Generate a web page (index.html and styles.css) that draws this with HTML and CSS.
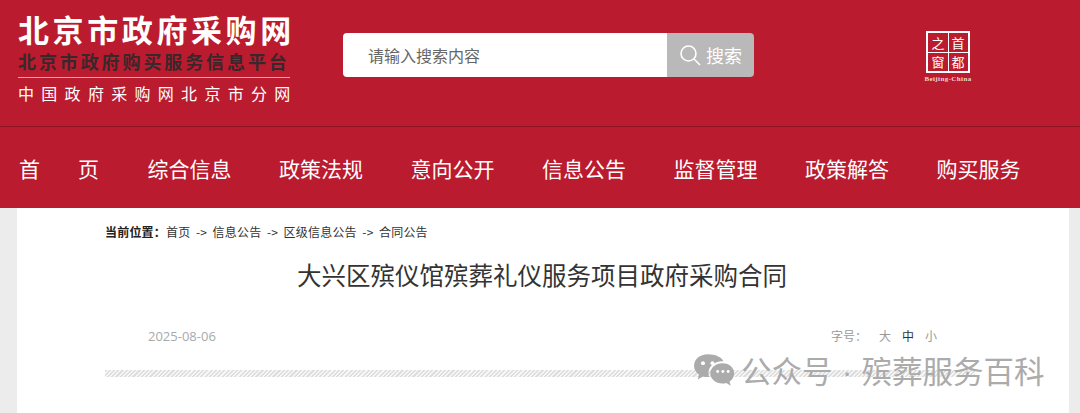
FILE: index.html
```html
<!DOCTYPE html>
<html lang="zh-CN">
<head>
    <meta charset="UTF-8">
    <title>大兴区殡仪馆殡葬礼仪服务项目政府采购合同</title>
    <link rel="stylesheet" href="styles.css">
</head>
<body>
    <header class="top">
        <div class="brand">
            <div class="brand-name">北京市政府采购网</div>
            <div class="brand-sub">北京市政府购买服务信息平台</div>
            <div class="brand-site">中国政府采购网北京市分网</div>
        </div>
        <div class="search">
            <div class="search-input">请输入搜索内容</div>
            <div class="search-btn">
                <svg class="search-icon" width="22" height="22" viewBox="0 0 22 22" fill="none" stroke="#fff" stroke-width="1.6">
                    <circle cx="9.500" cy="9.500" r="7.500"/>
                    <path d="M15 15l6 6"/>
                </svg>
                <span>搜索</span>
            </div>
        </div>
        <div class="seal">
            <div class="seal-box">
                <span>之</span><span>首</span><span>窗</span><span>都</span>
            </div>
            <div class="seal-text">Beijing-China</div>
        </div>
    </header>

    <nav class="nav">
        <a href="#" class="nav-home">首<i></i>页</a>
        <a href="#">综合信息</a>
        <a href="#">政策法规</a>
        <a href="#">意向公开</a>
        <a href="#">信息公告</a>
        <a href="#">监督管理</a>
        <a href="#">政策解答</a>
        <a href="#">购买服务</a>
    </nav>

    <main class="page">
        <div class="crumb"><b>当前位置：</b>首页 -&gt; 信息公告 -&gt; 区级信息公告 -&gt; 合同公告</div>
        <h1>大兴区殡仪馆殡葬礼仪服务项目政府采购合同</h1>
        <div class="meta">
            <span class="date">2025-08-06</span>
            <span class="size">字号：<em>大</em><em class="on">中</em><em>小</em></span>
        </div>
        <div class="stripe"></div>
    </main>

    <div class="mark">
        <svg width="42" height="36" viewBox="0 0 40 34">
            <path fill="#ababab" d="M14 1C6.500 1 1 5.800 1 12c0 3.500 1.800 6.400 4.800 8.500L4.500 25l5-2.800c1.400.4 2.800.6 4.300.6.600 0 1 0 1.500-.1-.4-1.200-.6-2.400-.6-3.700 0-6.400 5.800-11.400 13-11.400h1.300C27.200 3.700 21.200 1 14 1z"/>
            <path fill="#ababab" d="M28 9.500c-6.500 0-11.500 4.300-11.500 9.700s5 9.800 11.500 9.800c1.300 0 2.500-.2 3.700-.5l4.200 2.500-1.100-3.900c2.800-1.800 4.400-4.600 4.400-7.900 0-5.400-4.600-9.700-10.800-9.700z"/>
            <g fill="#fff">
                <circle cx="9.500" cy="9.500" r="1.900"/>
                <circle cx="18.500" cy="9.500" r="1.900"/>
                <circle cx="23.500" cy="17.500" r="1.400"/>
                <circle cx="28.500" cy="17.500" r="1.400"/>
                <circle cx="33.500" cy="17.500" r="1.400"/>
            </g>
        </svg>
        <span>公众号<span class="mark-dot"> · </span>殡葬服务百科</span>
    </div>
</body>
</html>
```

FILE: styles.css
```css
* {
    margin: 0;
    padding: 0;
    box-sizing: border-box;
}

html, body {
    height: 413px;
    overflow: hidden;
}

body {
    position: relative;
    background: #ececec;
    font-family: "Noto Sans CJK SC", "Liberation Sans", sans-serif;
    color: #333333;
}

.top {
    height: 127px;
    background: #bb1b2e;
    border-bottom: 1px solid #8f1423;
    display: flex;
    align-items: flex-start;
    padding-left: 18px;
}

.brand {
    width: 272px;
    padding-top: 10px;
}

.brand-name {
    font-size: 31px;
    line-height: 38px;
    font-weight: 700;
    color: #ffffff;
    letter-spacing: 3.6px;
    white-space: nowrap;
}

.brand-sub {
    margin-top: 2px;
    font-size: 18px;
    line-height: 23px;
    font-weight: 700;
    color: #38282b;
    letter-spacing: 2.9px;
    white-space: nowrap;
    padding-bottom: 4px;
    border-bottom: 1px solid #e6a5ad;
}

.brand-site {
    margin-top: 3px;
    font-size: 16px;
    line-height: 24px;
    color: #ffffff;
    letter-spacing: 7.3px;
    white-space: nowrap;
}

.search {
    display: flex;
    width: 411px;
    height: 44px;
    margin: 33px 0 0 53px;
    border-radius: 4px;
    overflow: hidden;
}

.search-input {
    width: 324px;
    background: #ffffff;
    padding-left: 25px;
    font-size: 16px;
    line-height: 44px;
    color: #666666;
}

.search-btn {
    flex: 1;
    background: #b9b9b9;
    display: flex;
    align-items: center;
    padding-left: 12px;
    gap: 5px;
    font-size: 18px;
    color: #ffffff;
}

.seal {
    margin: 31px 0 0 170px;
    width: 48px;
    display: flex;
    flex-direction: column;
    align-items: center;
}

.seal-box {
    width: 44px;
    height: 42px;
    border: 2px solid #ffffff;
    background: linear-gradient(#ffffff, #ffffff) center / 1px 100% no-repeat,
                linear-gradient(#ffffff, #ffffff) center / 100% 1px no-repeat;
    display: grid;
    grid-template-columns: 1fr 1fr;
    grid-template-rows: 1fr 1fr;
    font-size: 13px;
    line-height: 19px;
    color: #ffffff;
    text-align: center;
}

.seal-text {
    margin-top: 2px;
    font-family: "Liberation Serif", serif;
    font-size: 7px;
    font-weight: 700;
    line-height: 9px;
    letter-spacing: 0.4px;
    color: #f3d5d8;
    white-space: nowrap;
}

.nav {
    height: 81px;
    background: #bb1b2e;
    display: flex;
    align-items: center;
    gap: 47.5px;
    padding-left: 19px;
}

.nav a {
    font-size: 21px;
    line-height: 30px;
    color: #ffffff;
    text-decoration: none;
    white-space: nowrap;
}

.nav-home {
    display: flex;
    width: 80px;
    margin-right: 1px;
}

.nav-home i {
    flex: 1;
}

.page {
    width: 1052px;
    height: 205px;
    margin-left: 17px;
    background: #ffffff;
    padding: 0 94px 0 88px;
}

.crumb {
    padding-top: 15px;
    font-size: 12px;
    line-height: 18px;
    letter-spacing: 0.2px;
    word-spacing: 2.6px;
    color: #333333;
    white-space: nowrap;
}

.crumb b {
    font-weight: 700;
    color: #222222;
}

.page h1 {
    margin: 16px -92px 0 -88px;
    text-align: center;
    font-size: 24.5px;
    line-height: 36px;
    font-weight: 400;
    color: #333333;
}

.meta {
    display: flex;
    justify-content: space-between;
    margin-top: 34px;
    padding-left: 43px;
    padding-right: 38px;
    font-size: 12px;
    line-height: 18px;
    color: #a9a9a9;
}

.date {
    font-family: "Open Sans", "Liberation Sans", sans-serif;
    font-size: 13px;
}

.size {
    color: #999999;
}

.size em {
    font-style: normal;
    margin-left: 11px;
}

.size em:first-of-type {
    margin-left: 12px;
}

.size .on {
    color: #333333;
}

.stripe {
    height: 7px;
    margin-top: 25px;
    background: repeating-linear-gradient(135deg, #dedede 0, #dedede 1.5px, #f6f6f6 1.5px, #f6f6f6 3px);
}

/* watermark sits on top of the stripe */
.mark {
    position: absolute;
    left: 693px;
    top: 350px;
    display: flex;
    align-items: center;
    gap: 6px;
    font-size: 30.5px;
    line-height: 40px;
    color: #ababab;
    white-space: nowrap;
}

.mark-dot {
    font-family: "Liberation Sans", sans-serif;
    margin: 0 1px;
    white-space: pre;
}
```
